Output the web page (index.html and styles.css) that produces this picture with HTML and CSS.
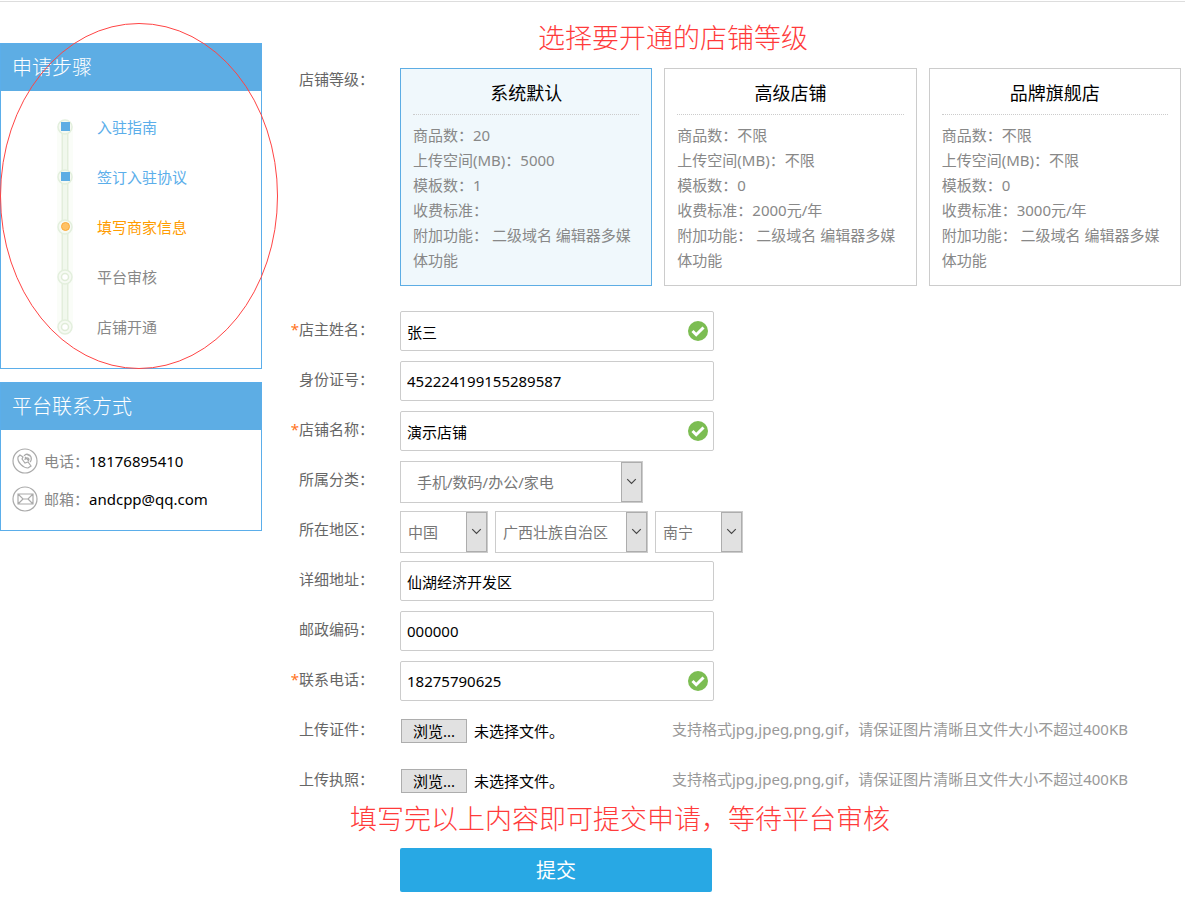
FILE: index.html
```html
<!DOCTYPE html>
<html lang="zh-CN">
<head>
<meta charset="utf-8">
<title>商家入驻申请</title>
<link rel="stylesheet" href="styles.css">
</head>
<body>
<svg class="defs" aria-hidden="true">
  <symbol id="ok" viewBox="0 0 20 20"><circle cx="10" cy="10" r="10" fill="#7cbd52"/><path d="M4.500 10l3.700 3.700 7.300-7.200" fill="none" stroke="#fff" stroke-width="3"/></symbol>
  <symbol id="chevron" viewBox="0 0 20 40"><path d="M5.500 17l4.500 4.500 4.500-4.500" fill="none" stroke="#444" stroke-width="1.2"/></symbol>
</svg>
<div class="page">
  <aside class="sidebar">
    <section class="panel">
      <h2 class="panel-title">申请步骤</h2>
      <div class="steps">
        <svg class="track" viewBox="0 0 16 218" aria-hidden="true">
          <path class="track-halo" d="M0 8h16v202H0z"/>
          <path class="track-line" d="M8 8v202"/>
          <path class="track-core" d="M8 8v202"/>
          <g class="track-node"><circle cx="8" cy="9" r="7"/><circle cx="8" cy="59" r="7"/><circle cx="8" cy="109" r="7"/><circle cx="8" cy="159" r="7"/><circle cx="8" cy="209" r="7"/></g>
          <path class="track-done" d="M4 4h9v9H4zM4 54h9v9H4z"/>
          <circle class="track-now" cx="8.500" cy="108.500" r="4"/>
          <g class="track-next"><circle cx="8" cy="159" r="3.500"/><circle cx="8" cy="209" r="3.500"/></g>
        </svg>
        <ol class="step-list">
          <li class="done">入驻指南</li>
          <li class="done">签订入驻协议</li>
          <li class="now">填写商家信息</li>
          <li>平台审核</li>
          <li>店铺开通</li>
        </ol>
      </div>
    </section>
    <section class="panel">
      <h2 class="panel-title">平台联系方式</h2>
      <ul class="contacts">
        <li>
          <svg class="contact-icon" viewBox="0 0 26 26" aria-hidden="true"><circle cx="13" cy="13" r="12"/><path d="M8 7l-2 2c-1 5 5 11 10 11l3-2-3-4-3 1-3-4 1-2zM12 8c2-3 6-2 7 1s0 4-1 5M13 9l4 4M13 12c0-3 4-3 4 0M14 6l4 2"/></svg>
          <span>电话：</span><span class="contact-value">18176895410</span>
        </li>
        <li>
          <svg class="contact-icon" viewBox="0 0 26 26" aria-hidden="true"><circle cx="13" cy="13" r="12"/><path d="M6 8h15v10H6zM6 8l5 5h5l5-5M6 18l5-5M21 18l-5-5"/></svg>
          <span>邮箱：</span><span class="contact-value">andcpp@qq.com</span>
        </li>
      </ul>
    </section>
    <svg class="ring" viewBox="0 0 280 348" aria-hidden="true"><ellipse cx="139" cy="174" rx="138.500" ry="172.500"/></svg>
  </aside>

  <main class="main">
    <p class="note note-top">选择要开通的店铺等级</p>
    <form class="form">
      <div class="row grade-row" role="radiogroup" aria-labelledby="grade-label">
        <span class="label grade-label" id="grade-label">店铺等级：</span>
        <div class="grades">
          <label class="grade">
            <input class="hidden-input" type="radio" name="grade" checked>
            <span class="grade-name">系统默认</span>
            <span class="grade-info">商品数：20<br>上传空间(MB)：5000<br>模板数：1<br>收费标准：<br>附加功能： 二级域名 编辑器多媒体功能</span>
          </label>
          <label class="grade">
            <input class="hidden-input" type="radio" name="grade">
            <span class="grade-name">高级店铺</span>
            <span class="grade-info">商品数：不限<br>上传空间(MB)：不限<br>模板数：0<br>收费标准：2000元/年<br>附加功能： 二级域名 编辑器多媒体功能</span>
          </label>
          <label class="grade">
            <input class="hidden-input" type="radio" name="grade">
            <span class="grade-name">品牌旗舰店</span>
            <span class="grade-info">商品数：不限<br>上传空间(MB)：不限<br>模板数：0<br>收费标准：3000元/年<br>附加功能： 二级域名 编辑器多媒体功能</span>
          </label>
        </div>
      </div>
      <div class="row">
        <label class="label" for="owner"><span class="must">*</span>店主姓名：</label>
        <div class="field"><input class="text" id="owner" type="text" value="张三"><svg class="ok"><use href="#ok"/></svg></div>
      </div>
      <div class="row">
        <label class="label" for="idno">身份证号：</label>
        <div class="field"><input class="text" id="idno" type="text" value="452224199155289587"></div>
      </div>
      <div class="row">
        <label class="label" for="shop"><span class="must">*</span>店铺名称：</label>
        <div class="field"><input class="text" id="shop" type="text" value="演示店铺"><svg class="ok"><use href="#ok"/></svg></div>
      </div>
      <div class="row">
        <label class="label" for="category">所属分类：</label>
        <div class="selects">
          <span class="select wide"><select id="category"><option>手机/数码/办公/家电</option></select><svg class="arrow"><use href="#chevron"/></svg></span>
        </div>
      </div>
      <div class="row">
        <label class="label" for="country">所在地区：</label>
        <div class="selects">
          <span class="select small"><select id="country"><option>中国</option></select><svg class="arrow"><use href="#chevron"/></svg></span>
          <span class="select medium"><select aria-label="省份"><option>广西壮族自治区</option></select><svg class="arrow"><use href="#chevron"/></svg></span>
          <span class="select small"><select aria-label="城市"><option>南宁</option></select><svg class="arrow"><use href="#chevron"/></svg></span>
        </div>
      </div>
      <div class="row">
        <label class="label" for="address">详细地址：</label>
        <div class="field"><input class="text" id="address" type="text" value="仙湖经济开发区"></div>
      </div>
      <div class="row">
        <label class="label" for="zip">邮政编码：</label>
        <div class="field"><input class="text" id="zip" type="text" value="000000"></div>
      </div>
      <div class="row">
        <label class="label" for="phone"><span class="must">*</span>联系电话：</label>
        <div class="field"><input class="text" id="phone" type="text" value="18275790625"><svg class="ok"><use href="#ok"/></svg></div>
      </div>
      <div class="row">
        <label class="label" for="cert">上传证件：</label>
        <div class="upload">
          <div class="file"><input class="hidden-input" id="cert" type="file"><label class="browse" for="cert">浏览...</label><span>未选择文件。</span></div>
          <span class="hint">支持格式jpg,jpeg,png,gif，请保证图片清晰且文件大小不超过400KB</span>
        </div>
      </div>
      <div class="row last">
        <label class="label" for="license">上传执照：</label>
        <div class="upload">
          <div class="file"><input class="hidden-input" id="license" type="file"><label class="browse" for="license">浏览...</label><span>未选择文件。</span></div>
          <span class="hint">支持格式jpg,jpeg,png,gif，请保证图片清晰且文件大小不超过400KB</span>
        </div>
      </div>
      <p class="note note-bottom">填写完以上内容即可提交申请，等待平台审核</p>
      <button class="submit" type="submit">提交</button>
    </form>
  </main>
</div>
</body>
</html>
```
FILE: styles.css
```css
* { box-sizing: border-box; }
body {
  margin: 0;
  background: #fff;
  color: #000;
  font: 15px/25px "Noto Sans", "Noto Sans CJK SC", sans-serif;
}
h2, p, ol, ul { margin: 0; padding: 0; font-weight: 400; list-style: none; }
input, select, button { font: inherit; color: inherit; }
.defs { position: absolute; width: 0; height: 0; }
.hidden-input { position: absolute; width: 1px; height: 1px; opacity: 0; }

.page {
  display: flex;
  align-items: flex-start;
  margin-top: 1px;
  border-top: 1px solid #ddd;
}

/* sidebar */
.sidebar {
  position: relative;
  flex: 0 0 262px;
  display: grid;
  gap: 13px;
  padding-top: 41px;
}
.panel { border: 1px solid #5baeea; }
.panel-title {
  padding-left: 11px;
  background: #5dade4;
  color: #fff;
  font-size: 20px;
  font-weight: 300;
  line-height: 47px;
}
.steps {
  display: flex;
  align-items: center;
  gap: 24px;
  padding: 11px 0 16px 56px;
}
.track { width: 16px; height: 218px; }
.track-halo { fill: #fafdf8; }
.track-line { stroke: #e3eedc; stroke-width: 7; }
.track-core { stroke: #f1f8ed; stroke-width: 4; }
.track-node { fill: #f6faf3; stroke: #e3efdd; stroke-width: 1.5; }
.track-done { fill: #5dade4; }
.track-now { fill: #ffc266; stroke: #fba93a; }
.track-next { fill: #fff; stroke: #e0ecd8; stroke-width: 1.5; }
.step-list { line-height: 50px; color: #888; }
.step-list .done { color: #5baeea; }
.step-list .now { color: #ff9c00; }
.contacts { padding: 12px 11px; color: #888; }
.contacts li { display: flex; align-items: center; height: 38px; }
.contact-icon { width: 26px; height: 26px; margin-right: 6px; fill: none; stroke: #aaa; stroke-width: 1.2; }
.contact-value { color: #000; }
.ring {
  position: absolute;
  left: 0;
  top: 20px;
  width: 280px;
  height: 348px;
  fill: none;
  stroke: #f44;
  pointer-events: none;
}

/* form */
.main { flex: 1; min-width: 0; padding: 18px 4px 9px 0; }
.note { color: #ff3b3b; font-size: 27px; font-weight: 300; line-height: 36px; }
.note-top { padding-left: 276px; margin-bottom: 12px; }
.note-bottom { padding-left: 88px; margin-bottom: 11px; }
.row {
  display: grid;
  grid-template-columns: 112px 1fr;
  column-gap: 26px;
  align-items: start;
  min-height: 50px;
}
.row.last { min-height: 40px; }
.grade-row { margin-bottom: 25px; }
.label { color: #666; line-height: 36px; text-align: right; white-space: nowrap; }
.grade-label { line-height: 22px; }
.must { color: #ff7322; }

.grades { display: grid; grid-template-columns: repeat(3, 1fr); gap: 12px; }
.grade { position: relative; padding: 0 12px 12px; border: 1px solid #ccc; }
.grade:has(:checked) { border-color: #5dade4; background: #f0f8fc; }
.grade-name {
  display: block;
  padding-top: 3px;
  border-bottom: 1px dotted #ccc;
  font-size: 18px;
  line-height: 42px;
  text-align: center;
}
.grade-info { display: block; padding-top: 8px; color: #888; }

.field { position: relative; width: 314px; max-width: 100%; }
.text {
  display: block;
  width: 100%;
  height: 40px;
  padding: 0 32px 0 6px;
  border: 1px solid #ccc;
  border-radius: 2px;
  background: #fff;
}
.ok { position: absolute; right: 6px; top: 10px; width: 20px; height: 20px; }

.selects { display: flex; gap: 7px; }
.select { position: relative; height: 42px; color: #777; }
.select.wide { width: 243px; }
.select.medium { width: 153px; }
.select.small { width: 88px; }
.select select {
  width: 100%;
  height: 100%;
  padding: 0 22px 0 7px;
  border: 1px solid #ccc;
  border-radius: 0;
  background: #fff;
  appearance: none;
}
.select.wide select { padding-left: 16px; }
.arrow {
  position: absolute;
  right: 1px;
  top: 1px;
  width: 21px;
  height: 40px;
  border: 1px solid #adadad;
  background: #e1e1e1;
  pointer-events: none;
}

.upload { display: grid; grid-template-columns: 272px 1fr; align-items: start; }
.file { position: relative; display: flex; align-items: center; gap: 7px; height: 40px; padding-left: 1px; }
.browse {
  width: 66px;
  height: 24px;
  border: 1px solid #adadad;
  background: #e1e1e1;
  line-height: 22px;
  text-align: center;
}
.hint { color: #999; line-height: 36px; }
.submit {
  display: block;
  width: 312px;
  height: 44px;
  margin-left: 138px;
  border: 0;
  border-radius: 2px;
  background: #28a8e4;
  color: #fff;
  font-size: 20px;
}
```
